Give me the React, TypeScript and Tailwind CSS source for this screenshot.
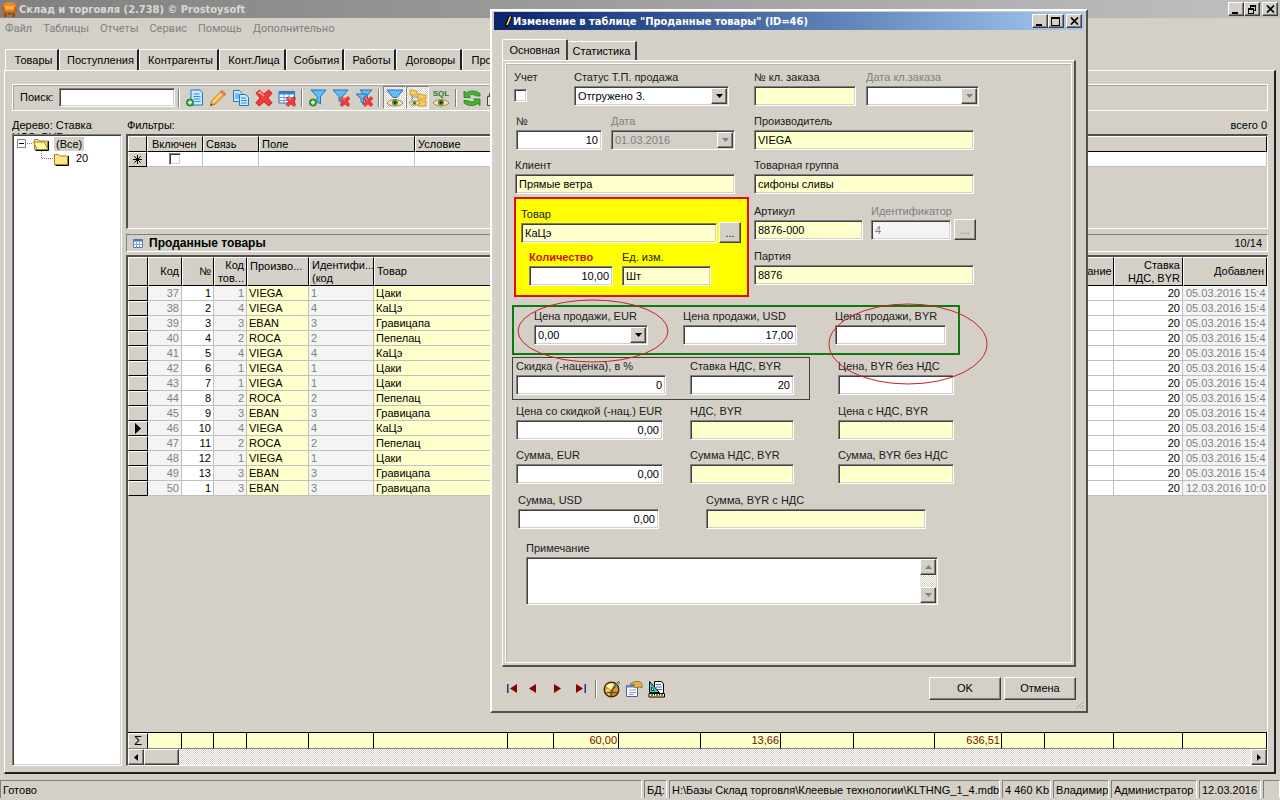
import React, { useId } from "react";

const sunken =
  "border border-t-[#808080] border-l-[#808080] border-r-white border-b-white shadow-[inset_1px_1px_0_#404040,inset_-1px_-1px_0_#d4d0c8]";
const raised =
  "border border-t-white border-l-white border-r-[#404040] border-b-[#404040] shadow-[inset_-1px_-1px_0_#808080]";
const dither =
  "bg-[repeating-conic-gradient(#ffffff_0_25%,#d4d0c8_0_50%)] bg-[length:2px_2px]";

/* ---------- form parts ---------- */

type FieldProps = {
  label: string;
  width: string;
  value?: string;
  tone?: "white" | "yellow" | "off";
  right?: boolean;
  bold?: boolean;
};

function Field({ label, width, value = "", tone = "white", right, bold }: FieldProps) {
  const id = useId();
  const bg =
    tone === "yellow" ? "bg-[#ffffcc]" : tone === "off" ? "bg-[#f4f4f4] text-[#808080]" : "bg-white";
  return (
    <div className={`flex flex-col gap-px ${width}`}>
      <label
        htmlFor={id}
        className={`h-[16px] leading-[16px] whitespace-nowrap ${
          bold ? "font-bold text-[#d01010]" : tone === "off" ? "text-[#808080]" : "text-[#202020]"
        }`}
      >
        {label}
      </label>
      <input
        id={id}
        type="text"
        defaultValue={value}
        disabled={tone === "off"}
        className={`h-[20px] w-full px-[3px] outline-none ${sunken} ${bg} ${right ? "text-right" : ""}`}
      />
    </div>
  );
}

function Combo({
  label,
  width,
  value,
  disabled,
  tone = "bg-white",
}: {
  label: string;
  width: string;
  value: string;
  disabled?: boolean;
  tone?: string;
}) {
  const id = useId();
  return (
    <div className={`flex flex-col gap-px ${width}`}>
      <label
        htmlFor={id}
        className={`h-[16px] leading-[16px] whitespace-nowrap ${disabled ? "text-[#808080]" : "text-[#202020]"}`}
      >
        {label}
      </label>
      <div className={`flex h-[20px] items-stretch p-px ${sunken} ${tone}`}>
        <select
          id={id}
          disabled={disabled}
          className={`min-w-0 flex-1 appearance-none bg-transparent px-[2px] outline-none ${
            disabled ? "text-[#808080]" : "text-black"
          }`}
        >
          <option>{value}</option>
        </select>
        <span className={`flex w-4 items-center justify-center bg-[#d4d0c8] ${raised}`}>
          <svg width="7" height="4" viewBox="0 0 7 4">
            <path d="M0 0h7L3.500 4z" fill={disabled ? "#808080" : "#000"} />
          </svg>
        </span>
      </div>
    </div>
  );
}

function Dots({ off, label }: { off?: boolean; label: string }) {
  return (
    <button
      type="button"
      aria-label={label}
      className={`h-[21px] w-[22px] bg-[#d4d0c8] leading-[18px] ${raised} ${off ? "text-[#808080]" : ""}`}
    >
      ...
    </button>
  );
}

function WinButtons({ restore }: { restore?: boolean }) {
  const cls = `flex h-[14px] w-4 items-center justify-center bg-[#d4d0c8] ${raised}`;
  return (
    <div className="flex items-center">
      <button type="button" aria-label="Свернуть" className={cls}>
        <svg width="10" height="9" viewBox="0 0 10 9">
          <path d="M1 7h6v2H1z" />
        </svg>
      </button>
      <button type="button" aria-label="Развернуть" className={cls}>
        <svg width="10" height="9" viewBox="0 0 10 9" shapeRendering="crispEdges">
          {restore ? (
            <path d="M3 0h6v6H7v3H1V3h2zM4 2v1h3v2h1V2zM2 5v3h4V5z" fillRule="evenodd" />
          ) : (
            <path d="M0 0h9v9H0zM1 2v6h7V2z" fillRule="evenodd" />
          )}
        </svg>
      </button>
      <button type="button" aria-label="Закрыть" className={`ml-0.5 ${cls}`}>
        <svg width="9" height="8" viewBox="0 0 9 8">
          <path d="M1 .5l7 7M8 .5l-7 7" stroke="#000" strokeWidth="1.700" />
        </svg>
      </button>
    </div>
  );
}

/* ---------- toolbar icons ---------- */

const Svg = ({ children }: { children: React.ReactNode }) => (
  <svg width="18" height="18" viewBox="0 0 18 18">
    {children}
  </svg>
);

const Cross = ({ x = 8, y = 8, s = 1 }: { x?: number; y?: number; s?: number }) => (
  <g transform={`translate(${x} ${y}) scale(${s})`}>
    <path
      d="M0 2L2 0l3 2.500L8 0l2 2-2.600 3L10 8l-2 2-3-2.600L2 10 0 8l2.500-3z"
      fill="#f23c3c"
      stroke="#cc1a1a"
      strokeWidth=".6"
    />
    <path d="M1.500 2L2.300 1.300 5 3.700" stroke="#ff9a9a" fill="none" />
  </g>
);

const Plus = () => (
  <g>
    <circle cx="4" cy="13.500" r="3.600" fill="#35a52c" stroke="#14701a" strokeWidth=".8" />
    <path d="M4 11.500v4M2 13.500h4" stroke="#fff" strokeWidth="1.300" />
  </g>
);

const Eye = () => (
  <g>
    <path d="M1 14c3-4.500 13-4.500 16 0-3 4-13 4-16 0z" fill="#f3dfbd" stroke="#a9824d" strokeWidth="1" />
    <circle cx="9" cy="13.600" r="3" fill="#5f8f2a" />
    <circle cx="9" cy="13.600" r="1.300" fill="#16300a" />
  </g>
);

const Funnel = ({ d = "M2 1h15l-5.500 6.500V15L8 12.500v-5z" }: { d?: string }) => (
  <path d={d} fill="#63bdf5" stroke="#1c73c4" strokeWidth="1" strokeLinejoin="round" />
);

const icons = {
  add: (
    <Svg>
      <path d="M5 1h9l2.500 3v12H5z" fill="#cfe9ff" stroke="#1f78c8" />
      <path d="M7.500 5h6M7.500 7.500h7M7.500 10h7M8.500 12.500h6" stroke="#2d8de0" />
      <Plus />
    </Svg>
  ),
  edit: (
    <Svg>
      <path d="M1.500 16.500l1.300-4.500L13 1.500 16.500 5 6 15.300z" fill="#fbb83a" stroke="#c4741a" />
      <path d="M4 13L14 3" stroke="#ffe49a" strokeWidth="1.500" />
      <path d="M13 1.500L16.500 5l-1.500 1.500L11.500 3z" fill="#f08a7a" stroke="#b85a3a" strokeWidth=".6" />
      <path d="M1.500 16.500l.6-2 1.500 1.400z" fill="#333" />
    </Svg>
  ),
  copy: (
    <Svg>
      <path d="M1.500 1.500h6l2.500 3v8H1.500z" fill="#cfe9ff" stroke="#1f78c8" />
      <path d="M3 5h4M3 7h4M3 9h4" stroke="#2d8de0" />
      <path d="M7.500 5.500h6L16.500 8v8.500h-9z" fill="#cfe9ff" stroke="#1f78c8" />
      <path d="M9 9h5M9 11.500h6M9 14h6" stroke="#2d8de0" />
    </Svg>
  ),
  del: (
    <Svg>
      <Cross x={1} y={1} s={1.6} />
    </Svg>
  ),
  delTable: (
    <Svg>
      <path d="M1 2.500h15.500v11.500H1z" fill="#fff" stroke="#1f6fc0" />
      <path d="M1 2.500h15.500v3H1z" fill="#2f86dc" />
      <path d="M1 8.500h15M1 11.500h15M6 5v9M11 5v9" stroke="#5ba4e4" />
      <Cross x={8} y={7.500} />
    </Svg>
  ),
  fAdd: (
    <Svg>
      <Funnel />
      <Plus />
    </Svg>
  ),
  fDel: (
    <Svg>
      <Funnel d="M1 1h15l-5.500 6.500V14L7 12V7.500z" />
      <Cross x={8} y={7.500} />
    </Svg>
  ),
  fDelAll: (
    <Svg>
      <Funnel d="M5 1h12l-4.500 5v6L9 10V6z" />
      <Funnel d="M1 5h11L8.500 9.500V15L6 13V9.500z" />
      <Cross x={8} y={7.500} />
    </Svg>
  ),
  fView: (
    <Svg>
      <Funnel d="M1 1h16L11 8.500H7z" />
      <Eye />
    </Svg>
  ),
  tree: (
    <Svg>
      <path d="M3 6v8h6M3 8h7" stroke="#888" fill="none" />
      <path d="M1 1h3l1 1h3v4H1zM9 5h3l1 1h4v4H9zM9 11h3l1 1h4v5H9z" fill="#fccf52" stroke="#c98b1c" strokeWidth=".8" />
      <path d="M0 14c2-3 9-3 11 0-2 3-9 3-11 0z" fill="#f3dfbd" stroke="#a9824d" strokeWidth=".8" />
      <circle cx="5.500" cy="14" r="1.800" fill="#4d7d22" />
    </Svg>
  ),
  sql: (
    <Svg>
      <text x="9" y="7" textAnchor="middle" fontSize="8" fontWeight="bold" fontFamily="Liberation Sans, sans-serif" fill="#1b7a2f">
        SQL
      </text>
      <Eye />
    </Svg>
  ),
  refresh: (
    <Svg>
      <path d="M1 2v6.500h6.500L5.500 6.500c2.500-1.500 6-1 8 .5H17V4.500C13 1.500 7 1 3.300 4z" fill="#45b52e" stroke="#1d7a17" strokeWidth=".8" />
      <path d="M17 16.500V10h-6.500l2 2c-2.500 1.500-6 1-8-.5H1V14c4 3 10 3.500 13.700.5z" fill="#45b52e" stroke="#1d7a17" strokeWidth=".8" />
    </Svg>
  ),
  lock: (
    <Svg>
      <path d="M3.500 9V5.500L6 2h6l2.500 3.500V9" fill="#f4f4f4" stroke="#444" strokeWidth="1.300" />
      <path d="M1.500 7.500h15v9h-15z" fill="#e8e8e8" stroke="#444" />
    </Svg>
  ),
};

function Tool({ name, label, pressed }: { name: keyof typeof icons; label: string; pressed?: boolean }) {
  return (
    <button
      type="button"
      aria-label={label}
      className={`flex h-[23px] w-[23px] items-center justify-center ${
        pressed ? `border border-t-[#808080] border-l-[#808080] border-r-white border-b-white ${dither}` : ""
      }`}
    >
      {icons[name]}
    </button>
  );
}

const Sep = () => (
  <span className="flex w-2 justify-center">
    <span className="h-[18px] w-[2px] border-r border-l border-r-white border-l-[#808080]" />
  </span>
);

const tabs: [string, string][] = [
  ["Товары", "w-[54px]"],
  ["Поступления", "w-[80px]"],
  ["Контрагенты", "w-[80px]"],
  ["Конт.Лица", "w-[67px]"],
  ["События", "w-[58px]"],
  ["Работы", "w-[52px]"],
  ["Договоры", "w-[66px]"],
  ["Продажи", "w-[62px]"],
];

/* ---------- main grid ---------- */

const colWidths = [20, 34, 32, 33, 62, 65, 134, 46, 65, 82, 80, 73, 81, 67, 43, 69, 69];

const Cols = () => (
  <colgroup>
    {colWidths.map((w, i) => (
      <col key={i} style={{ width: w }} />
    ))}
    <col />
  </colgroup>
);

const rows: [string, string, string, string, string][] = [
  ["37", "1", "1", "VIEGA", "Цаки"],
  ["38", "2", "4", "VIEGA", "КаЦэ"],
  ["39", "3", "3", "EBAN", "Гравицапа"],
  ["40", "4", "2", "ROCA", "Пепелац"],
  ["41", "5", "4", "VIEGA", "КаЦэ"],
  ["42", "6", "1", "VIEGA", "Цаки"],
  ["43", "7", "1", "VIEGA", "Цаки"],
  ["44", "8", "2", "ROCA", "Пепелац"],
  ["45", "9", "3", "EBAN", "Гравицапа"],
  ["46", "10", "4", "VIEGA", "КаЦэ"],
  ["47", "11", "2", "ROCA", "Пепелац"],
  ["48", "12", "1", "VIEGA", "Цаки"],
  ["49", "13", "3", "EBAN", "Гравицапа"],
  ["50", "1", "3", "EBAN", "Гравицапа"],
];

const th =
  "h-[29px] overflow-hidden border border-t-white border-l-white border-r-black border-b-black bg-[#d4d0c8] px-[2px] font-normal leading-[13px]";
const cell = "h-[15px] overflow-hidden border-b border-[#c0c0c0] leading-[14px] whitespace-nowrap";
const inner = "border-r px-[2px]";
const grey = "bg-[#f4f4f4] text-[#808080]";
const selector = "h-[15px] border border-t-white border-l-white border-r-black border-b-black bg-[#d4d0c8] p-0";

function MainGrid() {
  return (
    <table className="w-full table-fixed border-separate border-spacing-0">
      <Cols />
      <thead>
        <tr>
          <th className={th} />
          <th className={`${th} text-right`}>Код</th>
          <th className={`${th} text-right`}>№</th>
          <th className={`${th} text-right`}>
            Код
            <br />
            тов...
          </th>
          <th className={`${th} pt-[2px] text-left align-top whitespace-nowrap`}>Произво...</th>
          <th className={`${th} text-left whitespace-nowrap`}>
            Идентифи...
            <br />
            (код
          </th>
          <th className={`${th} text-left`}>Товар</th>
          {[7, 8, 9, 10, 11, 12, 13, 14].map((i) => (
            <th key={i} className={th} />
          ))}
          <th className={`${th} text-right`}>Примечание</th>
          <th className={`${th} text-right whitespace-nowrap`}>
            Ставка
            <br />
            НДС, BYR
          </th>
          <th className={`${th} text-right whitespace-nowrap`}>Добавлен</th>
        </tr>
      </thead>
      <tbody>
        {rows.map(([code, num, prod, maker, name]) => (
          <tr key={code}>
            <td className={selector}>
              {code === "46" && (
                <svg width="6" height="11" viewBox="0 0 6 11" className="ml-1.5 block">
                  <path d="M0 0l6 5.500L0 11z" />
                </svg>
              )}
            </td>
            <td className={`${cell} ${inner} ${grey} text-right`}>{code}</td>
            <td className={`${cell} ${inner} bg-white text-right`}>{num}</td>
            <td className={`${cell} ${inner} ${grey} text-right`}>{prod}</td>
            <td className={`${cell} ${inner} bg-[#ffffcc]`}>{maker}</td>
            <td className={`${cell} ${inner} ${grey}`}>{prod}</td>
            <td className={`${cell} ${inner} bg-[#ffffcc]`}>{name}</td>
            {[7, 8, 9, 10, 11, 12, 13, 14, 15].map((i) => (
              <td key={i} className={`${cell} ${inner} bg-white`} />
            ))}
            <td className={`${cell} ${inner} bg-white text-right`}>20</td>
            <td className={`${cell} ${grey} pl-[3px]`}>{code === "50" ? "12.03.2016 10:0" : "05.03.2016 15:4"}</td>
          </tr>
        ))}
      </tbody>
    </table>
  );
}

function Totals() {
  const sums = ["", "", "", "", "", "", "", "60,00", "", "13,66", "", "", "636,51", "", "", "", ""];
  return (
    <table className="w-full table-fixed border-separate border-spacing-0 border-t border-black" aria-label="Итоги">
      <Cols />
      <tbody>
        <tr>
          <th
            scope="row"
            className="h-[16px] border border-t-white border-l-white border-r-black border-b-[#808080] p-0 text-[13px] leading-[14px] font-normal"
          >
            Σ
          </th>
          {sums.map((s, i) => (
            <td
              key={i}
              className="h-[16px] border-r border-b border-r-black border-b-[#808080] bg-[#ffffcc] px-px text-right leading-[15px] text-[#701000]"
            >
              {s}
            </td>
          ))}
        </tr>
      </tbody>
    </table>
  );
}

function Filters() {
  const h =
    "h-[16px] border border-t-white border-l-white border-r-black border-b-black bg-[#d4d0c8] px-[2px] text-left font-normal leading-[14px]";
  const d = "h-[15px] border-r border-b border-[#c0c0c0] bg-white p-0";
  return (
    <div className="h-[95px] overflow-hidden border-t-2 border-r border-b border-l-2 border-t-[#505050] border-r-white border-b-white border-l-[#505050]">
      <table className="w-full table-fixed border-separate border-spacing-0">
        <colgroup>
          <col className="w-[19px]" />
          <col className="w-[56px]" />
          <col className="w-[56px]" />
          <col className="w-[156px]" />
          <col />
        </colgroup>
        <thead>
          <tr>
            <th className={h} />
            <th className={`${h} pl-[4px] whitespace-nowrap`}>Включен</th>
            <th className={h}>Связь</th>
            <th className={h}>Поле</th>
            <th className={h}>Условие</th>
          </tr>
        </thead>
        <tbody>
          <tr>
            <td className={selector}>
              <svg width="9" height="9" viewBox="0 0 9 9" className="mx-auto block">
                <path d="M4.500 0v9M0 4.500h9M1.300 1.300l6.400 6.400M7.700 1.300L1.300 7.700" stroke="#000" />
              </svg>
            </td>
            <td className={d}>
              <input
                type="checkbox"
                aria-label="Включен"
                className={`mx-auto block h-[12px] w-[12px] appearance-none bg-white ${sunken}`}
              />
            </td>
            <td className={d} />
            <td className={d} />
            <td className={d} />
          </tr>
        </tbody>
      </table>
    </div>
  );
}

const Folder = ({ open }: { open?: boolean }) => (
  <svg width="17" height="14" viewBox="0 0 17 14">
    <path d="M1.500 2.500h4l1.500 1.500h7.500v8.500h-13z" fill="#fde58c" stroke="#a08420" />
    {open && <path d="M.5 5h11l3.500 7.500H4z" fill="#fff7a8" stroke="#a08420" />}
    <path d="M15.500 4v9.500H2.500" stroke="#000" fill="none" />
  </svg>
);

function Tree() {
  return (
    <ul className={`flex-1 bg-white pt-px pl-[4px] ${sunken}`}>
      <li>
        <div className="flex h-[15px] items-center">
          <svg width="16" height="9" viewBox="0 0 16 9">
            <path d="M.5.500h8v8h-8z" fill="#fff" stroke="#808080" />
            <path d="M2 4.500h5" stroke="#000" />
            <path d="M10 4.500h6" stroke="#808080" strokeDasharray="1 1" />
          </svg>
          <Folder open />
          <span className="ml-[4px] bg-[#d4d0c8] px-[2px] leading-[14px]">(Все)</span>
        </div>
        <ul className="pl-[24px]">
          <li className="flex h-[15px] items-center">
            <svg width="12" height="15" viewBox="0 0 12 15">
              <path d="M.5 0v8M1 7.500h11" stroke="#808080" strokeDasharray="1 1" fill="none" />
            </svg>
            <Folder />
            <span className="ml-[6px]">20</span>
          </li>
        </ul>
      </li>
    </ul>
  );
}

/* ---------- edit dialog ---------- */

const NavIcon = ({ d, bar }: { d: string; bar?: number }) => (
  <svg width="12" height="9" viewBox="0 0 12 9">
    <path d={d} fill="#8b0000" />
    {bar !== undefined && <path d={`M${bar} 0h1.500v9h-1.500z`} fill="#2b2b8b" />}
  </svg>
);

function EditDialog() {
  const check = useId();
  const memo = useId();
  return (
    <section
      role="dialog"
      aria-label="Изменение в таблице"
      className="absolute top-[9px] left-[490px] w-[598px] border-2 border-t-white border-l-white border-r-[#505050] border-b-[#505050] bg-[#d4d0c8] px-[2px] pt-px pb-[11px]"
    >
      <header className="flex h-[18px] items-center bg-linear-to-r from-[#0a246a] to-[#a6caf0] pr-0.5 pl-2.5">
        <svg width="8" height="13" viewBox="0 0 8 13">
          <path d="M6.500 1L2 12" stroke="#000" strokeWidth="3.500" />
          <path d="M6.500 1.500L3 10" stroke="#f4ee60" strokeWidth="1.600" />
        </svg>
        <h2 className="ml-px flex-1 font-['DejaVu_Sans_Condensed',Tahoma,'Noto_Sans',sans-serif] text-[11px] font-bold whitespace-nowrap text-white">
          Изменение в таблице "Проданные товары" (ID=46)
        </h2>
        <WinButtons />
      </header>

      <div className="px-[8px] pt-[9px]">
        <div className="flex items-end">
          <button
            type="button"
            className="h-[21px] w-[66px] rounded-t-[2px] border-t border-r-2 border-l border-t-white border-r-[#404040] border-l-white text-center"
          >
            Основная
          </button>
          <button
            type="button"
            className="h-[19px] w-[69px] border-t border-r-2 border-t-white border-r-[#404040] text-center"
          >
            Статистика
          </button>
        </div>
        <div className="border-t border-r-2 border-b-2 border-l border-t-white border-r-[#505050] border-b-[#505050] border-l-white p-[2px]">
          <form
            className="border border-white pt-[5px] pb-[57px] pl-[6px] shadow-[inset_1px_1px_0_#b8b4ac]"
            onSubmit={(e) => e.preventDefault()}
          >
            <div className="flex">
              <div className="w-[242px] shrink-0 pl-[2px]">
                <div className="flex flex-col gap-[7px]">
                  <div className="flex h-[37px]">
                    <div className="flex w-[60px] flex-col gap-[4px]">
                      <label htmlFor={check} className="h-[16px] leading-[16px] text-[#202020]">
                        Учет
                      </label>
                      <input
                        id={check}
                        type="checkbox"
                        className={`h-[13px] w-[13px] appearance-none bg-white ${sunken}`}
                      />
                    </div>
                    <Combo label="Статус Т.П. продажа" width="w-[155px]" value="Отгружено 3." />
                  </div>
                  <div className="flex gap-[9px] pl-[2px]">
                    <Field label="№" width="w-[86px]" value="10" right />
                    <Combo label="Дата" width="w-[124px]" value="01.03.2016" disabled tone="bg-[#d4d0c8]" />
                  </div>
                  <div className="pl-px">
                    <Field label="Клиент" width="w-[220px]" value="Прямые ветра" tone="yellow" />
                  </div>
                </div>
                <div className="mt-[3px] flex w-[235px] flex-col gap-[6px] border-2 border-[#e01010] bg-[#ffff00] pt-[7px] pb-[9px] pl-[5px]">
                  <div className="flex items-end gap-[2px]">
                    <Field label="Товар" width="w-[196px]" value="КаЦэ" tone="yellow" />
                    <Dots label="Выбрать товар" />
                  </div>
                  <div className="flex gap-[9px] pl-[8px]">
                    <Field label="Количество" width="w-[84px]" value="10,00" right bold />
                    <Field label="Ед. изм." width="w-[89px]" value="Шт" tone="yellow" />
                  </div>
                </div>
              </div>
              <div className="flex-1">
                <div className="flex flex-col gap-[7px]">
                  <div className="flex gap-[10px]">
                    <Field label="№ кл. заказа" width="w-[102px]" tone="yellow" />
                    <Combo label="Дата кл.заказа" width="w-[113px]" value="" disabled />
                  </div>
                  <Field label="Производитель" width="w-[220px]" value="VIEGA" tone="yellow" />
                  <Field label="Товарная группа" width="w-[220px]" value="сифоны сливы" tone="yellow" />
                </div>
                <div className="mt-[9px] flex flex-col gap-[8px]">
                  <div className="flex items-end gap-[3px]">
                    <div className="flex gap-[8px]">
                      <Field label="Артикул" width="w-[109px]" value="8876-000" tone="yellow" />
                      <Field label="Идентификатор" width="w-[80px]" value="4" tone="off" />
                    </div>
                    <Dots off label="Выбрать идентификатор" />
                  </div>
                  <Field label="Партия" width="w-[220px]" value="8876" tone="yellow" />
                </div>
              </div>
            </div>

            <div className="relative mt-[8px] w-[448px] border-2 border-[#107a10] pt-px pb-[8px] pl-[20px]">
              <div className="flex">
                <div className="w-[149px]">
                  <Combo label="Цена продажи, EUR" width="w-[114px]" value="0,00" />
                </div>
                <div className="w-[152px]">
                  <Field label="Цена продажи, USD" width="w-[114px]" value="17,00" right />
                </div>
                <Field label="Цена продажи, BYR" width="w-[111px]" />
              </div>
              <svg
                width="484"
                height="90"
                viewBox="0 0 484 90"
                className="pointer-events-none absolute -top-[9px] left-0"
                fill="none"
                stroke="#cc1f1f"
              >
                <ellipse cx="79" cy="33" rx="75" ry="31" />
                <ellipse cx="394" cy="46" rx="79" ry="40" />
              </svg>
            </div>

            <div className="mt-[2px] flex gap-[28px]">
              <div className="flex w-[298px] gap-[24px] border border-[#404040] pb-[4px] pl-[3px]">
                <Field label="Скидка (-наценка), в %" width="w-[150px]" value="0" right />
                <Field label="Ставка НДС, BYR" width="w-[104px]" value="20" right />
              </div>
              <div className="pt-px">
                <Field label="Цена, BYR без НДС" width="w-[116px]" />
              </div>
            </div>

            <div className="mt-[3px] grid grid-cols-[174px_148px_116px] gap-y-[7px] pl-[4px]">
              <Field label="Цена со скидкой (-нац.) EUR" width="w-[147px]" value="0,00" right />
              <Field label="НДС, BYR" width="w-[104px]" tone="yellow" />
              <Field label="Цена с НДС, BYR" width="w-[116px]" tone="yellow" />
              <Field label="Сумма, EUR" width="w-[147px]" value="0,00" right />
              <Field label="Сумма НДС, BYR" width="w-[104px]" tone="yellow" />
              <Field label="Сумма, BYR без НДС" width="w-[116px]" tone="yellow" />
            </div>

            <div className="mt-[8px] grid grid-cols-[188px_220px] pl-[6px]">
              <Field label="Сумма, USD" width="w-[141px]" value="0,00" right />
              <Field label="Сумма, BYR с НДС" width="w-[220px]" tone="yellow" />
            </div>

            <div className="mt-[11px] flex flex-col gap-px pl-[14px]">
              <label htmlFor={memo} className="h-[16px] leading-[16px] text-[#202020]">
                Примечание
              </label>
              <div className={`flex h-[48px] w-[412px] bg-white p-px ${sunken}`}>
                <textarea id={memo} className="flex-1 resize-none overflow-hidden px-[3px] outline-none" />
                <div className={`flex w-4 flex-col justify-between ${dither}`} aria-hidden="true">
                  <span className={`flex h-4 items-center justify-center bg-[#d4d0c8] ${raised}`}>
                    <svg width="7" height="4" viewBox="0 0 7 4">
                      <path d="M0 4h7L3.500 0z" fill="#808080" />
                    </svg>
                  </span>
                  <span className={`flex h-4 items-center justify-center bg-[#d4d0c8] ${raised}`}>
                    <svg width="7" height="4" viewBox="0 0 7 4">
                      <path d="M0 0h7L3.500 4z" fill="#808080" />
                    </svg>
                  </span>
                </div>
              </div>
            </div>
          </form>
        </div>

        <footer className="mt-[10px] flex h-[23px] items-center">
          <div className="flex flex-1 items-center">
            <button type="button" aria-label="Первая" className="flex w-[19px] justify-center">
              <NavIcon d="M11 0v9L4 4.500z" bar={1} />
            </button>
            <button type="button" aria-label="Предыдущая" className="flex w-[24px] justify-center">
              <NavIcon d="M9 0v9L2 4.500z" />
            </button>
            <button type="button" aria-label="Следующая" className="flex w-[24px] justify-center">
              <NavIcon d="M3 0v9l7-4.500z" />
            </button>
            <button type="button" aria-label="Последняя" className="flex w-[23px] justify-center">
              <NavIcon d="M1 0v9l7-4.500z" bar={9.5} />
            </button>
            <Sep />
            <button type="button" aria-label="История" className="flex w-[23px] justify-center">
              <svg width="18" height="18" viewBox="0 0 18 18">
                <circle cx="8.500" cy="9.500" r="7.300" fill="#d89a2c" stroke="#3a2c08" strokeWidth="1.400" />
                <path d="M3 6a6 6 0 018-2L8 10z" fill="#fff6b8" />
                <path d="M2.500 10l3-1 2 3-2 3.500z" fill="#f7e08a" />
                <path d="M8.500 10.500l7-9 1 1.500z" fill="#fff" stroke="#222" strokeWidth=".8" />
                <path d="M4 12.500h10M8.500 10v6" stroke="#6a4a10" strokeWidth="1.500" />
              </svg>
            </button>
            <button type="button" aria-label="Свойства" className="flex w-[22px] justify-center">
              <svg width="18" height="18" viewBox="0 0 18 18">
                <path d="M1.500 5.500h11v11h-11z" fill="#fff" stroke="#53618c" />
                <path d="M1.500 5h11v2.500h-11z" fill="#5b7fd0" />
                <path d="M4 10h7M4 12.500h7M4 14.500h5" stroke="#8a98c0" />
                <path d="M5 4l5-2.500h5l2 2.500v4l-3-1-4 1-2-2 2-1z" fill="#e0b04a" stroke="#8a6a18" strokeWidth=".8" />
              </svg>
            </button>
            <button type="button" aria-label="Настройка" className="flex w-[23px] justify-center">
              <svg width="18" height="18" viewBox="0 0 18 18">
                <path d="M6.500 1.500h7L15.500 4v10h-9z" fill="#fff" stroke="#000" />
                <path d="M8 4.500h5M8 7h6M8 9.500h6" stroke="#5566aa" />
                <path d="M1.500 1.500v11h10z" fill="#34d6c0" stroke="#000" />
                <path d="M3.500 7v3.500h3z" fill="#fff" stroke="#000" strokeWidth=".7" />
                <path d="M1 13.500h15.500v3.500H1z" fill="#fff4a0" stroke="#000" />
                <path d="M4 14v2M6.500 14v1.500M9 14v2M11.500 14v1.500M14 14v2" stroke="#000" />
              </svg>
            </button>
          </div>
          <div className="flex gap-[3px]">
            <button type="submit" className={`h-[23px] w-[72px] ${raised}`}>
              OK
            </button>
            <button type="button" className={`h-[23px] w-[72px] ${raised}`}>
              Отмена
            </button>
          </div>
        </footer>
      </div>
      <svg width="9" height="9" viewBox="0 0 9 9" className="absolute right-0.5 bottom-0.5">
        <path d="M1 8.500l7-7M5 8.500l3.500-3.500" stroke="#808080" />
        <path d="M0 8.500l8-8M4 8.500l4.500-4.500" stroke="#fff" strokeWidth=".6" />
      </svg>
    </section>
  );
}

/* ---------- application window ---------- */

export default function App() {
  const search = useId();
  const status =
    "h-[18px] border-t border-l border-r border-t-[#808080] border-l-[#808080] border-r-white pl-[2px] leading-[18px] whitespace-nowrap overflow-hidden";
  return (
    <div className="relative flex min-h-screen w-full flex-col overflow-hidden bg-[#d4d0c8] font-['Liberation_Sans',Arial,sans-serif] text-[11px] leading-[13px] text-black">
      <header className="flex h-[18px] items-center bg-linear-to-r from-[#808080] to-[#c0c0c0] pr-0.5 pl-0.5">
        <svg width="15" height="16" viewBox="0 0 15 16">
          <path d="M2 3c0-2 11-2 11 0l1 3v4H1V6z" fill="#f08a1c" />
          <path d="M0 6h3v5h9V6h3v6H0z" fill="#c9620e" />
          <path d="M3 5h9v3H3z" fill="#ffb347" />
          <path d="M2 12h3v4H2zM10 12h3v4h-3zM6 12h3v2H6z" fill="#a34a08" />
        </svg>
        <h1 className="ml-[2px] flex-1 font-['DejaVu_Sans_Condensed',Tahoma,'Noto_Sans',sans-serif] text-[11px] font-bold whitespace-nowrap text-[#dcd8d0]">
          Склад и торговля (2.738) © Prostoysoft
        </h1>
        <WinButtons restore />
      </header>

      <nav className="flex h-[20px] items-center gap-[11px] pl-[5px] font-['Roboto',Tahoma,sans-serif] text-[11px] text-[#808080]">
        {["Файл", "Таблицы", "Отчеты", "Сервис", "Помощь", "Дополнительно"].map((m) => (
          <button key={m} type="button">
            {m}
          </button>
        ))}
      </nav>

      <div className="mt-[11px] flex pl-[5px]">
        {tabs.map(([t, w]) => (
          <button
            key={t}
            type="button"
            className={`h-[21px] rounded-tl-[2px] border-t border-r-2 border-l border-t-white border-r-[#202020] border-l-white pl-[4px] text-center whitespace-nowrap ${w}`}
          >
            {t}
          </button>
        ))}
      </div>

      <main className="mx-1 flex flex-1 flex-col border-t border-r-2 border-b-2 border-l border-t-white border-r-[#202020] border-b-[#202020] border-l-white pt-[13px] pr-[6px] pb-[6px] pl-[7px]">
        <div className="flex h-[27px] items-center border border-white pl-[7px] shadow-[inset_1px_1px_0_#a8a49c]">
          <label htmlFor={search} className="w-[39px]">
            Поиск:
          </label>
          <input id={search} type="text" className={`h-[19px] w-[116px] bg-white px-[3px] outline-none ${sunken}`} />
          <Sep />
          <Tool name="add" label="Добавить" />
          <Tool name="edit" label="Изменить" />
          <Tool name="copy" label="Копировать" />
          <Tool name="del" label="Удалить" />
          <Tool name="delTable" label="Удалить все" />
          <Sep />
          <Tool name="fAdd" label="Добавить фильтр" />
          <Tool name="fDel" label="Удалить фильтр" />
          <Tool name="fDelAll" label="Удалить все фильтры" />
          <Sep />
          <Tool name="fView" label="Показать фильтры" pressed />
          <Tool name="tree" label="Показать дерево" pressed />
          <Tool name="sql" label="Показать SQL" />
          <Sep />
          <Tool name="refresh" label="Обновить" />
          <Tool name="lock" label="Печать" />
        </div>

        <div className="mt-[8px] flex flex-1 gap-[4px]">
          <aside className="flex w-[110px] flex-col">
            <div className="h-[15px] overflow-hidden leading-[12px]">
              Дерево: Ставка
              <br />
              НДС, BYR
            </div>
            <Tree />
          </aside>
          <div className="flex min-w-0 flex-1 flex-col">
            <div className="flex h-[15px] justify-between px-px">
              <span>Фильтры:</span>
              <span>всего 0</span>
            </div>
            <Filters />
            <div className="mt-[5px] flex h-[18px] items-center border border-t-[#808080] border-l-[#808080] border-r-white border-b-white pr-[5px] pl-[6px]">
              <svg width="10" height="9" viewBox="0 0 10 9">
                <path d="M.5.500h9v8h-9z" fill="#fff" stroke="#5878c0" />
                <path d="M.5.500h9v2h-9z" fill="#4a72cc" />
                <path d="M1 5.500h8M3.500 3v5M6.500 3v5" stroke="#8aa4dc" />
              </svg>
              <h2 className="ml-[6px] flex-1 text-[12px] font-bold">Проданные товары</h2>
              <span>10/14</span>
            </div>
            <div className="mt-[3px] flex flex-1 flex-col overflow-hidden border-t-2 border-r border-b border-l-2 border-t-[#505050] border-r-white border-b-white border-l-[#505050]">
              <MainGrid />
              <div className="flex-1" />
              <Totals />
              <div className={`flex h-4 ${dither}`}>
                <button
                  type="button"
                  aria-label="Влево"
                  className={`flex w-4 items-center justify-center bg-[#d4d0c8] ${raised}`}
                >
                  <svg width="4" height="7" viewBox="0 0 4 7">
                    <path d="M4 0v7L0 3.500z" />
                  </svg>
                </button>
                <span className={`w-[35px] bg-[#d4d0c8] ${raised}`} />
                <span className="flex-1" />
                <button
                  type="button"
                  aria-label="Вправо"
                  className={`flex w-4 items-center justify-center bg-[#d4d0c8] ${raised}`}
                >
                  <svg width="4" height="7" viewBox="0 0 4 7">
                    <path d="M0 0v7l4-3.500z" />
                  </svg>
                </button>
              </div>
            </div>
          </div>
        </div>
      </main>

      <footer className="mt-[6px] flex h-[20px] gap-[2px]">
        <div className={`${status} flex-1`}>Готово</div>
        <div className={`${status} w-[23px]`}>БД:</div>
        <div className={`${status} w-[331px]`}>H:\Базы Склад торговля\Клеевые технологии\KLTHNG_1_4.mdb</div>
        <div className={`${status} w-[49px]`}>4 460 Kb</div>
        <div className={`${status} w-[56px]`}>Владимир</div>
        <div className={`${status} w-[86px]`}>Администратор</div>
        <div className={`${status} w-[62px]`}>12.03.2016</div>
        <div className={`${status} w-[17px]`} />
      </footer>

      <EditDialog />
    </div>
  );
}
